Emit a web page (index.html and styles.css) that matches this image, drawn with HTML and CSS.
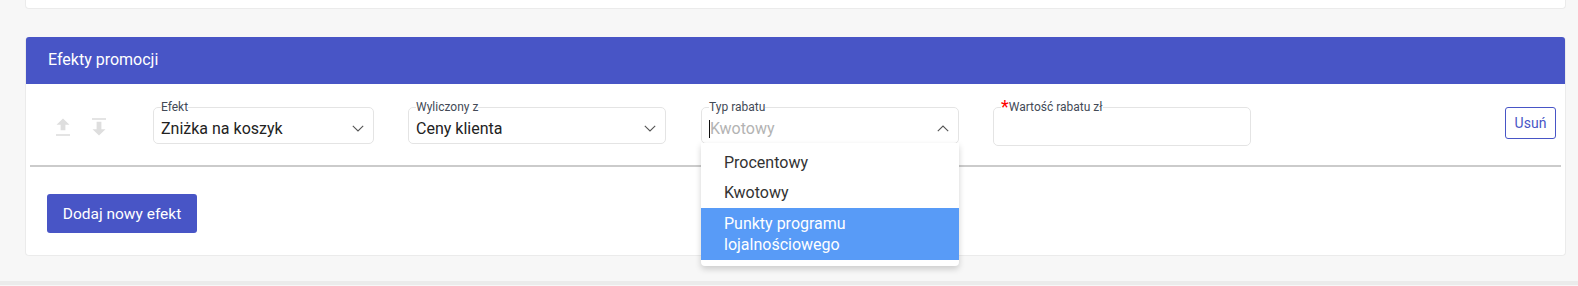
FILE: index.html
```html
<!DOCTYPE html>
<html lang="pl">
<head>
    <meta charset="UTF-8">
    <title>Efekty promocji</title>
    <link rel="stylesheet" href="styles.css">
</head>
<body>
    <div class="page">
        <!-- koniec poprzedniej karty -->
        <div class="prev-card"></div>

        <div class="card">
            <div class="card-header">Efekty promocji</div>
            <div class="card-body">
                <div class="effect-row">
                    <div class="move-buttons">
                        <svg class="move-icon" width="14" height="18" viewBox="0 0 14 18">
                            <polygon points="7,0.5 13.5,6.8 9.4,6.8 9.4,12.2 4.6,12.2 4.6,6.8 0.5,6.8"/>
                            <rect x="0" y="16.2" width="14" height="1.6"/>
                        </svg>
                        <svg class="move-icon" width="14" height="18" viewBox="0 0 14 18">
                            <rect x="0" y="0.2" width="14" height="1.6"/>
                            <polygon points="7,17.5 13.5,11.2 9.4,11.2 9.4,3.8 4.6,3.8 4.6,11.2 0.5,11.2"/>
                        </svg>
                    </div>

                    <div class="field field-effect">
                        <fieldset>
                            <legend>Efekt</legend>
                            <div class="select-value">
                                <span>Zniżka na koszyk</span>
                                <svg class="chevron" width="12" height="7" viewBox="0 0 12 7"><polyline points="0.8,0.8 6,6 11.2,0.8"/></svg>
                            </div>
                        </fieldset>
                    </div>

                    <div class="field field-base">
                        <fieldset>
                            <legend>Wyliczony z</legend>
                            <div class="select-value">
                                <span>Ceny klienta</span>
                                <svg class="chevron" width="12" height="7" viewBox="0 0 12 7"><polyline points="0.8,0.8 6,6 11.2,0.8"/></svg>
                            </div>
                        </fieldset>
                    </div>

                    <div class="field">
                        <fieldset>
                            <legend>Typ rabatu</legend>
                            <div class="select-value">
                                <span class="placeholder"><i class="caret"></i>Kwotowy</span>
                                <svg class="chevron" width="12" height="7" viewBox="0 0 12 7"><polyline points="0.8,6.2 6,1 11.2,6.2"/></svg>
                            </div>
                        </fieldset>
                        <ul class="dropdown">
                            <li>Procentowy</li>
                            <li>Kwotowy</li>
                            <li class="active">Punkty programu lojalnościowego</li>
                        </ul>
                    </div>

                    <div class="field field-amount">
                        <fieldset>
                            <legend><span class="required">*</span>Wartość rabatu zł</legend>
                            <div class="input-value"></div>
                        </fieldset>
                    </div>

                    <button type="button" class="btn-remove">Usuń</button>
                </div>

                <div class="separator"></div>

                <button type="button" class="btn-add">Dodaj nowy efekt</button>
            </div>
        </div>
    </div>
    <div class="page-bottom"></div>
</body>
</html>
```

FILE: styles.css
```css
/* podstawowe */
body {
    margin: 0;
    background-color: #f7f7f7;
    font-family: Roboto, "Liberation Sans", sans-serif;
    color: #222;
}

.page {
    padding: 0 12px 0 25px;
}

.prev-card {
    height: 8px;
    background-color: #fff;
    border: 1px solid #ebebeb;
    border-top: 0;
    border-radius: 0 0 4px 4px;
}

.card {
    margin-top: 28px;
    background-color: #fff;
    border: 1px solid #ebebeb;
    border-top: 0;
    border-radius: 4px;
}

.card-header {
    height: 47px;
    line-height: 46px;
    padding-left: 22px;
    background-color: #4855c6;
    color: #fff;
    font-size: 16px;
    border-radius: 3px 3px 0 0;
}

.card-body {
    padding: 16px 4px 22px;
}

/* wiersz efektu */
.effect-row {
    display: flex;
    align-items: flex-start;
    padding-left: 26px;
}

.move-buttons {
    display: flex;
    gap: 22px;
    margin-top: 18px;
    margin-right: 47px;
}

.move-icon {
    display: block;
    fill: #dedede;
}

.field {
    position: relative;
    width: 258px;
    margin-right: 34px;
}

.field-effect {
    width: 221px;
}

.field-base {
    margin-right: 35px;
}

.field-amount {
    margin-right: 0;
}

fieldset {
    margin: 0;
    padding: 0 9px 0 7px;
    border: 1px solid #e4e4e4;
    border-radius: 5px;
    min-width: 0;
}

legend {
    padding: 0;
    font-size: 12px;
    line-height: 14px;
    color: #434a56;
}

.required {
    color: #f00;
    font-size: 18px;
    vertical-align: top;
    line-height: 14px;
}

.select-value {
    display: flex;
    align-items: center;
    justify-content: space-between;
    height: 29px;
    font-size: 16px;
}

.input-value {
    height: 31px;
}

.chevron {
    display: block;
    fill: none;
    stroke: #555;
    stroke-width: 1.1;
}

.placeholder {
    color: #b3b3b3;
    display: flex;
    align-items: center;
}

.caret {
    display: inline-block;
    width: 1px;
    height: 18px;
    background-color: #111;
}

/* lista rozwijana */
.dropdown {
    position: absolute;
    top: 43px;
    left: 0;
    right: 0;
    margin: 0;
    padding: 5px 0 6px;
    list-style: none;
    background-color: #fff;
    border-radius: 0 0 4px 4px;
    box-shadow: 0 3px 6px rgba(0, 0, 0, 0.18);
    font-size: 16px;
    color: #333;
    z-index: 2;
}

.dropdown li {
    padding: 5px 22px 5px 23px;
    line-height: 20px;
}

.dropdown li.active {
    background-color: #589bf7;
    color: #fff;
    line-height: 21px;
}

/* przyciski */
.btn-remove {
    margin: 7px 5px 0 auto;
    width: 51px;
    height: 32px;
    padding: 0;
    background-color: #fff;
    border: 1px solid #4855c6;
    border-radius: 3px;
    color: #4855c6;
    font-family: inherit;
    font-size: 14px;
}

.separator {
    height: 2px;
    margin-top: 19px;
    background-color: #cbcbcb;
}

.btn-add {
    display: block;
    margin: 27px 0 0 17px;
    width: 150px;
    height: 39px;
    padding: 0;
    background-color: #4855c6;
    border: 0;
    border-radius: 3px;
    color: #fff;
    font-family: inherit;
    font-size: 15.5px;
}

.page-bottom {
    height: 4px;
    margin-top: 25px;
    background-color: #ebebeb;
}
```
